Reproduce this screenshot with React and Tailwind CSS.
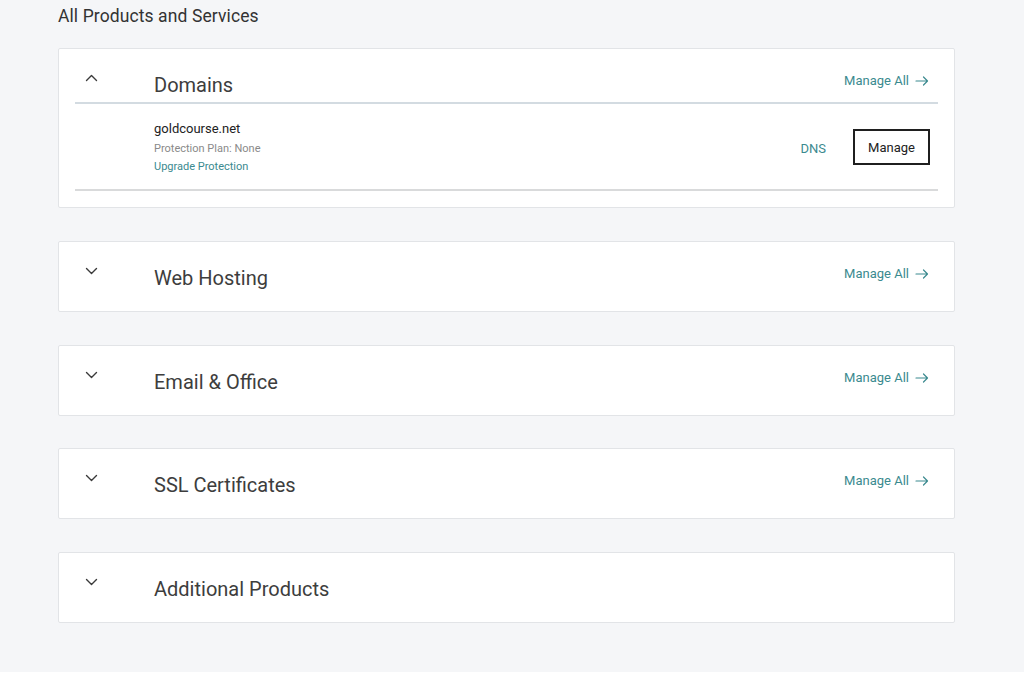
const teal = "text-[#3b8a8f]";

function Chevron({ up }) {
  return (
    <svg width="13" height="8" viewBox="0 0 13 8" className="block">
      <path
        d={up ? "M1.5 6.5 L6.5 1.5 L11.5 6.5" : "M1.5 1.5 L6.5 6.5 L11.5 1.5"}
        fill="none"
        stroke="#3a3a3a"
        strokeWidth="1.4"
        strokeLinecap="round"
        strokeLinejoin="round"
      />
    </svg>
  );
}

function ManageAll() {
  return (
    <a className={`flex items-center gap-[6px] text-[13px] leading-[16px] ${teal}`}>
      Manage All
      <svg width="14" height="10" viewBox="0 0 14 10">
        <path d="M1 5 H12.5 M8.5 1 L12.5 5 L8.5 9" fill="none" stroke="#3b8a8f" strokeWidth="1.2" strokeLinecap="round" strokeLinejoin="round" />
      </svg>
    </a>
  );
}

function Header({ title, open, manage = true }) {
  return (
    <div className="flex items-start h-[54px] pl-[26px] pr-[25px]">
      <div className="w-[69px] pt-[25px]">
        <Chevron up={open} />
      </div>
      <h2 className="flex-1 pt-[24px] text-[20px] leading-[24px] text-[#3d3d3d]">{title}</h2>
      {manage && (
        <div className="pt-[24px]">
          <ManageAll />
        </div>
      )}
    </div>
  );
}

export default function App() {
  const collapsed = [
    { title: "Web Hosting", manage: true, gap: "mt-[33px]" },
    { title: "Email & Office", manage: true, gap: "mt-[33px]" },
    { title: "SSL Certificates", manage: true, gap: "mt-[32px]" },
    { title: "Additional Products", manage: false, gap: "mt-[33px]" },
  ];
  return (
    <div className="bg-white" style={{ fontFamily: "Roboto, 'Open Sans', sans-serif" }}>
      <div className="h-[672px] bg-[#f5f6f8] pl-[58px] pt-[5px]">
        <div className="w-[897px]">
          <h1 className="text-[17.5px] leading-[22px] text-[#333] tracking-[0.1px]">All Products and Services</h1>

          <div className="mt-[21px] bg-white border border-[#e2e4e7] rounded-[2px] h-[160px]">
            <div className="h-[53px]">
              <Header title="Domains" open />
            </div>
            <div className="mx-[16px] border-t-2 border-[#d3dbe1]">
              <div className="flex items-start pl-[79px] pr-[8px] pt-[17px] pb-[15px] border-b-2 border-[#d9dadb]">
                <div className="flex-1">
                  <div className="text-[13px] leading-[16px] text-[#222]">goldcourse.net</div>
                  <div className="mt-[5px] text-[11px] leading-[14px] text-[#8a8a8a]">Protection Plan: None</div>
                  <div className={`mt-[4px] text-[11px] leading-[14px] ${teal}`}>Upgrade Protection</div>
                </div>
                <a className={`text-[13px] leading-[16px] mr-[27px] mt-[20px] ${teal}`}>DNS</a>
                <button className="w-[77px] h-[36px] mt-[8px] pt-[2px] border-2 border-[#1f1f1f] text-[13px] text-[#222] bg-white">
                  Manage
                </button>
              </div>
            </div>
          </div>

          {collapsed.map((c) => (
            <div key={c.title} className={`${c.gap} bg-white border border-[#e2e4e7] rounded-[2px] h-[71px]`}>
              <Header title={c.title} manage={c.manage} />
            </div>
          ))}
        </div>
      </div>
    </div>
  );
}
